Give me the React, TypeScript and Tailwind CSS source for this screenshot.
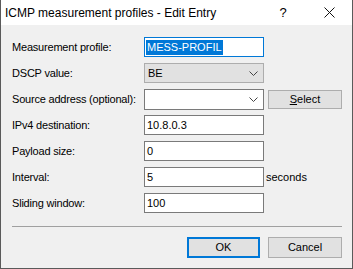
import React from 'react'

const font = { fontFamily: '"Liberation Sans", Arial, sans-serif' }

function Chevron() {
  return (
    <svg width="9" height="5" viewBox="0 0 9 5" className="shrink-0">
      <path d="M0.5 0.5 L4.5 4.5 L8.5 0.5" fill="none" stroke="#444" strokeWidth="1" />
    </svg>
  )
}

function Row({ label, children }: { label: string; children: React.ReactNode }) {
  return (
    <div className="flex items-center h-[20px]">
      <div className="w-[143px] shrink-0 whitespace-nowrap pl-[11px] text-[11px] text-black leading-none tracking-[-0.2px]">
        {label}
      </div>
      {children}
    </div>
  )
}

function TextBox({ value }: { value: string }) {
  return (
    <div className="w-[120px] shrink-0 h-[20px] bg-white border border-[#7a7a7a] flex items-center px-[2px] text-[11px] text-black">
      {value}
    </div>
  )
}

export default function App() {
  return (
    <div
      className="w-[353px] h-[269px] flex flex-col bg-[#f0f0f0] border-x border-b border-[#5a5a5a] overflow-hidden"
      style={font}
    >
      <div className="h-[25px] bg-white flex items-center shrink-0">
        <span className="pl-[4px] text-[12px] text-black">ICMP measurement profiles - Edit Entry</span>
        <span className="ml-auto w-[46px] text-center text-[13px] text-black">?</span>
        <span className="w-[46px] flex items-center justify-center">
          <svg width="11" height="11" viewBox="0 0 11 11">
            <path d="M0.5 0.5 L10.5 10.5 M10.5 0.5 L0.5 10.5" stroke="#111" strokeWidth="1" />
          </svg>
        </span>
      </div>

      <div className="flex flex-col gap-[6px] pt-[12px]">
        <Row label="Measurement profile:">
          <div className="w-[120px] shrink-0 h-[20px] bg-white border border-[#0078d7] flex items-center px-[1px] text-[11px]">
            <span className="bg-[#0078d7] text-white px-[1px] leading-[15px]">MESS-PROFIL</span>
          </div>
        </Row>
        <Row label="DSCP value:">
          <div className="w-[120px] shrink-0 h-[20px] bg-[#e1e1e1] border border-[#adadad] flex items-center pl-[3px] pr-[5px] text-[11px] text-black">
            <span>BE</span>
            <span className="ml-auto"><Chevron /></span>
          </div>
        </Row>
        <Row label="Source address (optional):">
          <div className="w-[120px] shrink-0 h-[21px] bg-white border border-[#7a7a7a] flex items-center pl-[3px] pr-[5px] text-[11px]">
            <span className="ml-auto"><Chevron /></span>
          </div>
          <div className="ml-[4px] w-[74px] shrink-0 h-[19px] bg-[#e1e1e1] border border-[#adadad] flex items-center justify-center text-[11px] text-black">
            <span><span className="underline">S</span>elect</span>
          </div>
        </Row>
        <Row label="IPv4 destination:">
          <TextBox value="10.8.0.3" />
        </Row>
        <Row label="Payload size:">
          <TextBox value="0" />
        </Row>
        <Row label="Interval:">
          <TextBox value="5" />
          <span className="ml-[2px] text-[11px] text-black">seconds</span>
        </Row>
        <Row label="Sliding window:">
          <TextBox value="100" />
        </Row>
      </div>

      <div className="mt-[13px] ml-[11px] mr-[10px] h-[1px] bg-[#a0a0a0]" />

      <div className="flex justify-end gap-[8px] pr-[10px] mt-[10px]">
        <div className="w-[73px] h-[21px] bg-[#e1e1e1] border-2 border-[#0078d7] flex items-center justify-center text-[11px] text-black">
          OK
        </div>
        <div className="w-[74px] h-[21px] bg-[#e1e1e1] border border-[#adadad] flex items-center justify-center text-[11px] text-black">
          Cancel
        </div>
      </div>
    </div>
  )
}
